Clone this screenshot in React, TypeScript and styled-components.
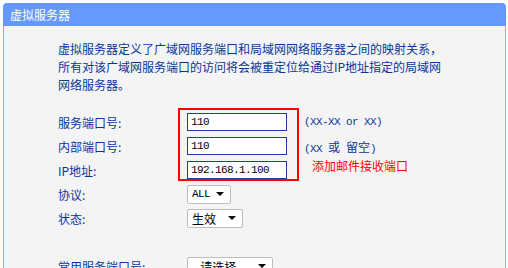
import styled, { createGlobalStyle } from "styled-components";

const GlobalStyle = createGlobalStyle`
  html, body {
    margin: 0;
    padding: 0;
    background: #ffffff;
    overflow: hidden;
  }
`;

const cjk = `"Noto Sans CJK SC", "Noto Sans", sans-serif`;
const mono = `"Liberation Mono", "Noto Sans CJK SC", monospace`;

const Panel = styled.div`
  margin: 3px 0 0 3px;
  width: 503px;
  font-family: ${cjk};
`;

const Header = styled.div`
  height: 23px;
  background: #6699ff;
  border-radius: 4px 4px 0 0;
  color: #ffffff;
  font-size: 12px;
  line-height: 23px;
  padding-left: 7px;
`;

const Body = styled.div`
  background: #f4f4f4;
  border-left: 1px solid #f5a040;
  border-right: 1px solid #f5a040;
  min-height: 260px;
  padding: 14px 0 0 54px;
`;

const Intro = styled.p`
  margin: 0;
  color: #08369a;
  font-size: 12px;
  line-height: 18px;
  white-space: nowrap;
`;

const Form = styled.div`
  position: relative;
  margin-top: 16px;
  display: grid;
  grid-template-columns: 129px 117px auto;
  grid-auto-rows: 24px;
  align-items: center;
`;

const Label = styled.div`
  color: #08369a;
  font-size: 12px;
`;

const Field = styled.input`
  box-sizing: border-box;
  width: 100px;
  height: 18px;
  border: 1px solid #1e3f9c;
  background: #ffffff;
  padding: 0 3px;
  margin: 0;
  font-family: ${mono};
  font-size: 11px;
  letter-spacing: -0.6px;
  color: #000000;
  outline: none;
`;

const Select = styled.div<{ $w: number }>`
  box-sizing: border-box;
  width: ${({ $w }) => $w}px;
  height: 19px;
  border: 1px solid #bdbdbd;
  border-radius: 2px;
  background: #ffffff;
  display: flex;
  align-items: center;
  justify-content: space-between;
  padding: 0 6px 0 4px;
  font-size: 12px;
  color: #000000;
`;

const SelectText = styled.span<{ $mono?: boolean }>`
  font-family: ${({ $mono }) => ($mono ? mono : cjk)};
  font-size: ${({ $mono }) => ($mono ? "11px" : "12px")};
  letter-spacing: ${({ $mono }) => ($mono ? "-0.6px" : "0")};
`;

const Arrow = styled.span`
  width: 0;
  height: 0;
  border-left: 4px solid transparent;
  border-right: 4px solid transparent;
  border-top: 4px solid #000000;
`;

const Hint = styled.div`
  color: #08369a;
  font-family: ${mono};
  font-size: 11px;
  letter-spacing: -0.6px;
  white-space: nowrap;
`;

const HintCjk = styled.span`
  font-family: ${cjk};
  font-size: 12px;
  letter-spacing: 0;
`;

const Note = styled.div`
  align-self: start;
  margin-left: 8px;
  color: #ff0000;
  font-size: 12px;
  line-height: 16px;
`;

const Spacer = styled.div`
  grid-column: 1 / -1;
  height: 22px;
`;

const Highlight = styled.div`
  position: absolute;
  left: 120px;
  top: -2px;
  width: 121px;
  height: 73px;
  box-sizing: border-box;
  border: 2px solid #ff0000;
  pointer-events: none;
`;

export default function App() {
  return (
    <>
      <GlobalStyle />
      <Panel>
        <Header>虚拟服务器</Header>
        <Body>
          <Intro>
            虚拟服务器定义了广域网服务端口和局域网网络服务器之间的映射关系，
            <br />
            所有对该广域网服务端口的访问将会被重定位给通过IP地址指定的局域网
            <br />
            网络服务器。
          </Intro>
          <Form>
            <Label>服务端口号:</Label>
            <Field defaultValue="110" readOnly />
            <Hint>(XX-XX or XX)</Hint>

            <Label>内部端口号:</Label>
            <Field defaultValue="110" readOnly />
            <Hint>
              (XX <HintCjk>或</HintCjk> <HintCjk>留空</HintCjk>)
            </Hint>

            <Label>IP地址:</Label>
            <Field defaultValue="192.168.1.100" readOnly />
            <Note>添加邮件接收端口</Note>

            <Label>协议:</Label>
            <Select $w={44}>
              <SelectText $mono>ALL</SelectText>
              <Arrow />
            </Select>
            <div />

            <Label>状态:</Label>
            <Select $w={56}>
              <SelectText>生效</SelectText>
              <Arrow />
            </Select>
            <div />

            <Spacer />

            <Label>常用服务端口号:</Label>
            <Select $w={86}>
              <SelectText>--请选择--</SelectText>
              <Arrow />
            </Select>
            <div />

            <Highlight />
          </Form>
        </Body>
      </Panel>
    </>
  );
}
